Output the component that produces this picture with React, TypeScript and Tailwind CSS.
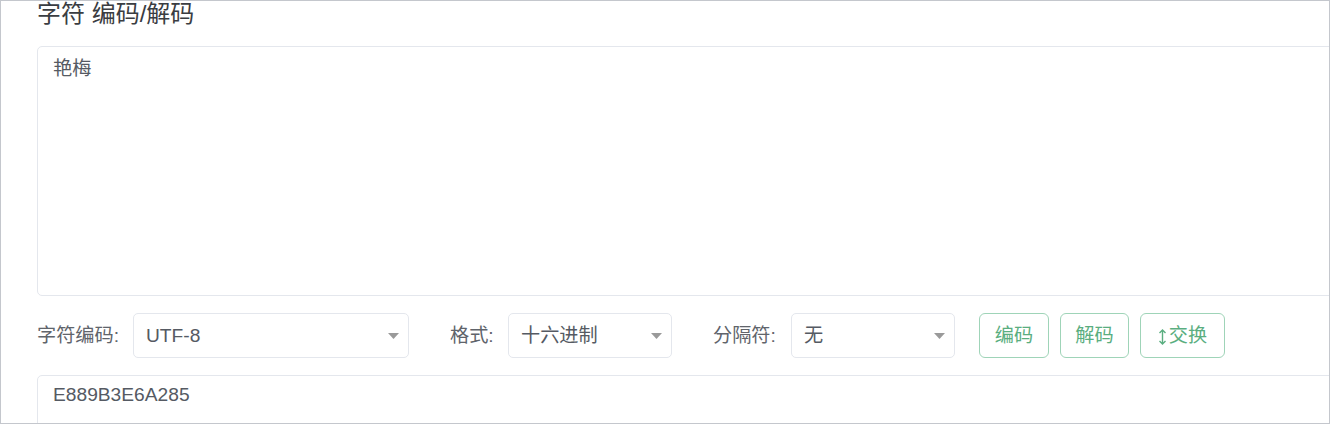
import React from "react";

const font = { fontFamily: '"Liberation Sans", "Noto Sans CJK SC", sans-serif' };

function Caret() {
  return (
    <svg width="11" height="6" viewBox="0 0 11 6" className="absolute right-[9px] top-1/2 -translate-y-1/2">
      <path d="M0 0 H11 L5.5 6 Z" fill="#9a9a9a" />
    </svg>
  );
}

function Select({ value, width }: { value: string; width: string }) {
  return (
    <div className={`relative h-[45px] ${width} flex items-center rounded-[5px] border border-[#e4e7ed] bg-white pl-[12px] pt-[2px] text-[19.2px] text-[#555a63]`}>
      {value}
      <Caret />
    </div>
  );
}

function Btn({ children, width }: { children: React.ReactNode; width: string }) {
  return (
    <button className={`h-[45px] ${width} flex items-center justify-center rounded-[6px] border border-[#9fd4b8] bg-white pt-[2px] text-[19.2px] text-[#5aae80]`}>
      {children}
    </button>
  );
}

export default function App() {
  return (
    <div style={font} className="w-[1330px] h-[424px] overflow-hidden border border-[#c4c7cd] bg-white pl-[36px]">
      <div className="h-[26px] leading-[26px] text-[24px] text-[#3a3d42] mb-[19px]">字符 编码/解码</div>
      <div className="h-[250px] w-[1320px] rounded-[5px] border border-[#e4e7ed] px-[15px] pt-[8px] text-[19.2px] leading-[28.8px] text-[#555a63]">
        艳梅
      </div>
      <div className="mt-[17px] flex h-[45px] items-center">
        <div className="w-[96px] pt-[2px] text-[19.2px] text-[#60646b]">字符编码:</div>
        <Select value="UTF-8" width="w-[276px]" />
        <div className="ml-[41px] w-[58px] pt-[2px] text-[19.2px] text-[#60646b]">格式:</div>
        <Select value="十六进制" width="w-[164px]" />
        <div className="ml-[41px] w-[78px] pt-[2px] text-[19.2px] text-[#60646b]">分隔符:</div>
        <Select value="无" width="w-[164px]" />
        <div className="ml-[24px] flex gap-[11px]">
          <Btn width="w-[70px]">编码</Btn>
          <Btn width="w-[69px]">解码</Btn>
          <Btn width="w-[85px]">
            <svg width="9" height="18" viewBox="0 0 9 18" className="mr-[2px]">
              <path d="M4.5 2 V16 M1.5 5 L4.5 2 L7.5 5 M1.5 13 L4.5 16 L7.5 13" stroke="#5aae80" strokeWidth="1.4" fill="none" />
            </svg>
            交换
          </Btn>
        </div>
      </div>
      <div className="mt-[17px] h-[120px] w-[1320px] rounded-[5px] border border-[#e4e7ed] px-[15px] pt-[5px] text-[19.2px] leading-[28.8px] text-[#555a63]">
        E889B3E6A285
      </div>
    </div>
  );
}
